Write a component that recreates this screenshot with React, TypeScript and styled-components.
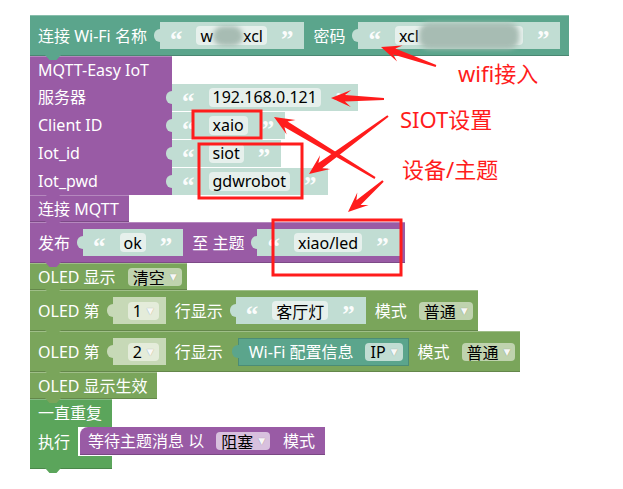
import React from 'react'
import styled, { createGlobalStyle } from 'styled-components'

const TEAL = '#5ba58c'
const PURPLE = '#995ba5'
const OLED = '#7aa55b'
const LOOP = '#5ba55b'
const RED = '#ff1c1c'

const GlobalStyle = createGlobalStyle`
  html, body {
    margin: 0;
    padding: 0;
    background: #fff;
  }
  body {
    font-family: "Noto Sans", "Noto Sans CJK SC", sans-serif;
  }
`

const Canvas = styled.div`
  position: relative;
  width: 623px;
  height: 489px;
  padding: 15px 0 0 30px;
  box-sizing: border-box;
  overflow: hidden;
`

const Stack = styled.div`
  display: flex;
  flex-direction: column;
  align-items: flex-start;
`

const Block = styled.div<{ $color: string; $tall?: boolean; $pr?: number }>`
  position: relative;
  display: flex;
  align-items: center;
  box-sizing: border-box;
  height: ${p => (p.$tall ? 41 : 27)}px;
  padding: 0 ${p => p.$pr ?? 5}px 0 8px;
  background: ${p => p.$color};
  color: #fff;
  font-size: 16px;
  box-shadow: inset 0 1px 0 rgba(255, 255, 255, 0.28), inset 0 -1px 0 rgba(0, 0, 0, 0.18);

  /* next-statement tab */
  &::after {
    content: '';
    position: absolute;
    left: 15px;
    bottom: -4px;
    width: 16px;
    height: 5px;
    background: ${p => p.$color};
    clip-path: polygon(0 0, 100% 0, 72% 100%, 28% 100%);
    z-index: 2;
  }
`

const Label = styled.span`
  white-space: nowrap;
  line-height: 1;
`

const Slot = styled.div<{ $flush?: boolean }>`
  position: relative;
  display: flex;
  align-items: center;
  gap: 14px;
  box-sizing: border-box;
  height: 27px;
  padding: 0 11px 0 10px;
  margin: ${p => (p.$flush ? '0' : '0 9px 0 13px')};
  background: #c1ddd3;

  &:last-child {
    margin-right: 0;
  }

  /* output connector */
  &::before {
    content: '';
    position: absolute;
    left: -6px;
    top: 7px;
    width: 7px;
    height: 13px;
    background: inherit;
    border-radius: 6px 0 0 6px;
  }
`

const Quote = styled.span`
  font-family: "Liberation Serif", serif;
  font-weight: bold;
  font-size: 25px;
  line-height: 1;
  color: rgba(255, 255, 255, 0.95);
  transform: translateY(4px);
`

const TextChip = styled.span`
  display: inline-flex;
  align-items: center;
  height: 19px;
  padding: 0 4px;
  border-radius: 4px;
  background: #e6f0ec;
  color: #000;
  font-size: 16px;
  white-space: nowrap;
`

const Mosaic = styled.span<{ $w: number; $big?: boolean }>`
  display: inline-block;
  width: ${p => p.$w}px;
  height: ${p => (p.$big ? 26 : 20)}px;
  margin: ${p => (p.$big ? '-4px 0' : '0')};
  border-radius: 10px;
  background: #a7bcb3;
  filter: blur(2.5px);
`

const Dropdown = styled.span<{ $tint: string }>`
  display: inline-flex;
  align-items: center;
  gap: 5px;
  height: 18px;
  padding: 0 5px;
  margin: 0 13px 0 12px;
  border-radius: 4px;
  background: ${p => p.$tint};
  color: #000;
  font-size: 16px;
  white-space: nowrap;

  &:last-child {
    margin-right: 0;
  }
`

const Caret = styled.span`
  font-family: "DejaVu Sans", sans-serif;
  font-size: 9px;
  color: rgba(255, 255, 255, 0.95);
  text-shadow: 0 0 1px rgba(0, 0, 0, 0.35);
`

const NumSlot = styled.div`
  position: relative;
  display: flex;
  align-items: center;
  box-sizing: border-box;
  height: 27px;
  padding: 0 7px 0 3px;
  margin: 0 9px 0 13px;
  background: #c7d9b7;

  &::before {
    content: '';
    position: absolute;
    left: -6px;
    top: 7px;
    width: 7px;
    height: 13px;
    background: inherit;
    border-radius: 6px 0 0 6px;
  }
`

const Reporter = styled.div`
  position: relative;
  display: flex;
  align-items: center;
  box-sizing: border-box;
  height: 28px;
  padding: 0 5px 0 10px;
  margin: 0 9px 0 15px;
  background: ${TEAL};
  border: 1px solid #4b8c76;
  color: #fff;

  &::before {
    content: '';
    position: absolute;
    left: -7px;
    top: 6px;
    width: 7px;
    height: 13px;
    background: ${TEAL};
    border-radius: 6px 0 0 6px;
  }
`

const MqttBlock = styled.div`
  position: relative;
  display: flex;
  flex-direction: column;
  color: #fff;
  font-size: 16px;

  &::after {
    content: '';
    position: absolute;
    left: 15px;
    bottom: -4px;
    width: 16px;
    height: 5px;
    background: ${PURPLE};
    clip-path: polygon(0 0, 100% 0, 72% 100%, 28% 100%);
    z-index: 2;
  }
`

const MqttHead = styled.div`
  display: flex;
  align-items: center;
  box-sizing: border-box;
  width: 142px;
  height: 27px;
  padding-left: 8px;
  background: ${PURPLE};
  box-shadow: inset 0 1px 0 rgba(255, 255, 255, 0.28);
`

const FieldRow = styled.div`
  display: flex;
  align-items: center;
  height: 28px;
`

const FieldLabel = styled.div`
  display: flex;
  align-items: center;
  box-sizing: border-box;
  width: 142px;
  height: 100%;
  padding-left: 8px;
  background: ${PURPLE};
`

const Loop = styled.div`
  position: relative;
  display: flex;
  flex-direction: column;
  color: #fff;
  font-size: 16px;
`

const LoopHead = styled.div`
  display: flex;
  align-items: center;
  box-sizing: border-box;
  width: 82px;
  height: 28px;
  padding-left: 8px;
  background: ${LOOP};
  box-shadow: inset 0 1px 0 rgba(255, 255, 255, 0.25);
`

const LoopMouth = styled.div`
  display: flex;
  align-items: stretch;
  height: 29px;
`

const LoopArm = styled.div`
  display: flex;
  align-items: center;
  box-sizing: border-box;
  width: 48px;
  padding-left: 8px;
  background: ${LOOP};
`

const InnerBlock = styled.div`
  display: flex;
  align-items: center;
  box-sizing: border-box;
  height: 28px;
  margin-left: 2px;
  padding: 0 10px 0 8px;
  border-radius: 8px 0 0 0;
  background: ${PURPLE};
  color: #fff;
  box-shadow: inset 0 -1px 0 rgba(0, 0, 0, 0.2);
`

const LoopFoot = styled.div`
  position: relative;
  width: 82px;
  height: 13px;
  background: ${LOOP};
  box-shadow: inset 0 -1px 0 rgba(0, 0, 0, 0.18);

  &::after {
    content: '';
    position: absolute;
    left: 15px;
    bottom: -4px;
    width: 16px;
    height: 5px;
    background: ${LOOP};
    clip-path: polygon(0 0, 100% 0, 72% 100%, 28% 100%);
  }
`

const Overlay = styled.svg`
  position: absolute;
  left: 0;
  top: 0;
  pointer-events: none;
`

const Note = styled.span<{ $x: number; $y: number }>`
  position: absolute;
  left: ${p => p.$x}px;
  top: ${p => p.$y}px;
  color: ${RED};
  font-size: 22px;
  line-height: 1;
  white-space: nowrap;
`

const TextInput: React.FC<{ children: React.ReactNode; flush?: boolean }> = ({ children, flush }) => (
  <Slot $flush={flush}>
    <Quote>“</Quote>
    <TextChip>{children}</TextChip>
    <Quote>”</Quote>
  </Slot>
)

const Field: React.FC<{ tint: string; children: React.ReactNode }> = ({ tint, children }) => (
  <Dropdown $tint={tint}>
    {children}
    <Caret>▼</Caret>
  </Dropdown>
)

// arrow polygon, thin tail widening to a swept-back head
const arrowPoints = (tx: number, ty: number, px: number, py: number) => {
  const dx = px - tx
  const dy = py - ty
  const len = Math.hypot(dx, dy)
  const ux = dx / len
  const uy = dy / len
  const nx = -uy
  const ny = ux
  const headLen = 20
  const headHalf = 8.5
  const neckBack = 14
  const neckHalf = 3.2
  const tailHalf = 1
  const pt = (x: number, y: number) => `${x.toFixed(1)},${y.toFixed(1)}`
  const hx = px - ux * headLen
  const hy = py - uy * headLen
  const kx = px - ux * neckBack
  const ky = py - uy * neckBack
  return [
    pt(tx + nx * tailHalf, ty + ny * tailHalf),
    pt(kx + nx * neckHalf, ky + ny * neckHalf),
    pt(hx + nx * headHalf, hy + ny * headHalf),
    pt(px, py),
    pt(hx - nx * headHalf, hy - ny * headHalf),
    pt(kx - nx * neckHalf, ky - ny * neckHalf),
    pt(tx - nx * tailHalf, ty - ny * tailHalf),
  ].join(' ')
}

const arrows = [
  [436, 66, 381, 47],
  [384, 99, 331, 98],
  [388, 116, 309, 174],
  [375, 178, 274, 117],
  [383, 181, 348, 212],
]

const boxes = [
  { x: 193, y: 111, w: 68, h: 27 },
  { x: 199, y: 144, w: 103, h: 54 },
  { x: 273, y: 220, w: 128, h: 55 },
]

const mqttFields = [
  { label: '服务器', value: '192.168.0.121' },
  { label: 'Client ID', value: 'xaio' },
  { label: 'Iot_id', value: 'siot' },
  { label: 'Iot_pwd', value: 'gdwrobot' },
]

export default function App() {
  return (
    <>
      <GlobalStyle />
      <Canvas>
        <Stack>
          <Block $color={TEAL} $tall $pr={9}>
            <Label>连接 Wi-Fi 名称</Label>
            <TextInput>
              w<Mosaic $w={30} />xcl
            </TextInput>
            <Label>密码</Label>
            <TextInput>
              xcl<Mosaic $w={100} $big />
            </TextInput>
          </Block>

          <MqttBlock>
            <MqttHead>
              <Label>MQTT-Easy IoT</Label>
            </MqttHead>
            {mqttFields.map(f => (
              <FieldRow key={f.label}>
                <FieldLabel>
                  <Label>{f.label}</Label>
                </FieldLabel>
                <TextInput flush>{f.value}</TextInput>
              </FieldRow>
            ))}
          </MqttBlock>

          <Block $color={PURPLE} $pr={10}>
            <Label>连接 MQTT</Label>
          </Block>

          <Block $color={PURPLE} $tall>
            <Label>发布</Label>
            <TextInput>ok</TextInput>
            <Label>至 主题</Label>
            <TextInput>xiao/led</TextInput>
          </Block>

          <Block $color={OLED}>
            <Label>OLED 显示</Label>
            <Field tint="#bfd3ae">清空</Field>
          </Block>

          <Block $color={OLED} $tall>
            <Label>OLED 第</Label>
            <NumSlot>
              <Field tint="#e4ecda">1</Field>
            </NumSlot>
            <Label>行显示</Label>
            <TextInput>客厅灯</TextInput>
            <Label>模式</Label>
            <Field tint="#bfd3ae">普通</Field>
          </Block>

          <Block $color={OLED} $tall>
            <Label>OLED 第</Label>
            <NumSlot>
              <Field tint="#e4ecda">2</Field>
            </NumSlot>
            <Label>行显示</Label>
            <Reporter>
              <Label>Wi-Fi 配置信息</Label>
              <Field tint="#c1ddd3">IP</Field>
            </Reporter>
            <Label>模式</Label>
            <Field tint="#bfd3ae">普通</Field>
          </Block>

          <Block $color={OLED} $pr={9}>
            <Label>OLED 显示生效</Label>
          </Block>

          <Loop>
            <LoopHead>
              <Label>一直重复</Label>
            </LoopHead>
            <LoopMouth>
              <LoopArm>
                <Label>执行</Label>
              </LoopArm>
              <InnerBlock>
                <Label>等待主题消息 以</Label>
                <Field tint="#d8c0de">阻塞</Field>
                <Label>模式</Label>
              </InnerBlock>
            </LoopMouth>
            <LoopFoot />
          </Loop>
        </Stack>

        <Overlay width={623} height={489} viewBox="0 0 623 489">
          {boxes.map((b, i) => (
            <rect key={i} x={b.x} y={b.y} width={b.w} height={b.h} fill="none" stroke={RED} strokeWidth={3} />
          ))}
          {arrows.map((a, i) => (
            <polygon key={i} points={arrowPoints(a[0], a[1], a[2], a[3])} fill={RED} />
          ))}
        </Overlay>
        <Note $x={458} $y={62}>wifi接入</Note>
        <Note $x={400} $y={108}>SIOT设置</Note>
        <Note $x={402} $y={158}>设备/主题</Note>
      </Canvas>
    </>
  )
}
